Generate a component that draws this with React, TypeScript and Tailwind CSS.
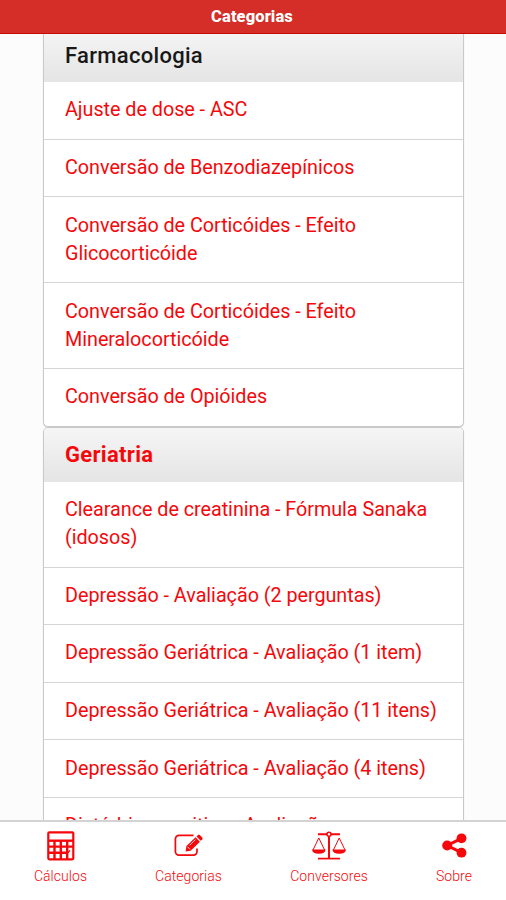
import type { ReactNode } from "react";

type Section = {
    title: string;
    active?: boolean;
    items: string[];
};

const sections: Section[] = [
    {
        title: "Farmacologia",
        items: [
            "Ajuste de dose - ASC",
            "Conversão de Benzodiazepínicos",
            "Conversão de Corticóides - Efeito Glicocorticóide",
            "Conversão de Corticóides - Efeito Mineralocorticóide",
            "Conversão de Opióides",
        ],
    },
    {
        title: "Geriatria",
        active: true,
        items: [
            "Clearance de creatinina - Fórmula Sanaka (idosos)",
            "Depressão - Avaliação (2 perguntas)",
            "Depressão Geriátrica - Avaliação (1 item)",
            "Depressão Geriátrica - Avaliação (11 itens)",
            "Depressão Geriátrica - Avaliação (4 itens)",
            "Distúrbio cognitivo - Avaliação",
        ],
    },
];

function CalculatorIcon() {
    return (
        <svg width="28" height="30" viewBox="0 0 28 30" fill="none" stroke="currentColor">
            <rect x="1.3" y="1.3" width="25" height="27" rx="1" strokeWidth="2.2" />
            <path d="M1 9.7h26" strokeWidth="2.4" />
            <path d="M1 15.6h26M1 21.8h20" strokeWidth="2.4" />
            <path d="M7.5 10v18M13.8 10v18M20.2 10v18" strokeWidth="2.4" />
            <path d="M20 22.5l3-3" strokeWidth="1.3" />
        </svg>
    );
}

function EditIcon() {
    return (
        <svg width="30" height="25" viewBox="0 0 30 25" fill="none" stroke="currentColor">
            <path d="M19.5 2.3H5a3.6 3.6 0 0 0-3.6 3.6v12.6A3.6 3.6 0 0 0 5 22.1h14.4a3.6 3.6 0 0 0 3.6-3.6V15.6" strokeWidth="1.7" />
            <path d="M11.6 18.6l.8-5.5L21.6 4.3l4.3 4.5-9.2 8.9z" fill="currentColor" stroke="none" />
            <path d="M22.5 3.4l1.6-1.5q.8-.7 1.6 0l2.6 2.7q.7.8 0 1.6l-1.6 1.6z" fill="currentColor" stroke="none" />
            <path d="M13.5 13.7l2.6 2.7M15.5 12.3l6-5.7" stroke="#fff" strokeWidth="0.8" />
        </svg>
    );
}

function ScaleIcon() {
    return (
        <svg width="36" height="30" viewBox="0 0 36 30" fill="none" stroke="currentColor">
            <path d="M7 3.2h22M18 4v23" strokeWidth="2" />
            <path d="M7 27.6h22" strokeWidth="1.7" />
            <circle cx="18" cy="3.2" r="2" fill="#fff" strokeWidth="1.5" />
            <path d="M2 19L7.8 7l5.8 12M22.4 19L28.2 7 34 19" strokeWidth="1" />
            <path d="M1 18.5h13.6q-.5 4.3-6.8 4.3T1 18.5zM21.4 18.5H35q-.5 4.3-6.8 4.3t-6.8-4.3z" fill="currentColor" stroke="none" />
        </svg>
    );
}

function ShareIcon() {
    return (
        <svg width="25" height="25" viewBox="0 0 25 25" fill="currentColor">
            <circle cx="5.2" cy="12.5" r="5" />
            <circle cx="19.5" cy="5.3" r="4.9" />
            <circle cx="19.5" cy="19.7" r="4.9" />
            <path d="M19.5 5.3L5.2 12.5l14.3 7.2" fill="none" stroke="currentColor" strokeWidth="3" />
        </svg>
    );
}

function NavItem({ icon, label, className }: { icon: ReactNode; label: string; className: string }) {
    return (
        <a className={`flex flex-col items-center ${className}`}>
            <span className="flex h-[31px] items-center">{icon}</span>
            <span className="mt-[6px] text-[14px] leading-[18px] font-light tracking-[0.05px]">{label}</span>
        </a>
    );
}

export default function App() {
    return (
        <div className="flex h-[900px] w-[506px] flex-col overflow-hidden bg-[#fcfcfc] font-['Roboto',sans-serif]">
            <header className="flex h-[34px] shrink-0 items-center justify-center border-b border-[#c90b08] bg-[#d52d28] pt-[2px] pr-[2px] text-[16.5px] font-extrabold tracking-[0.1px] text-white">
                Categorias
            </header>

            <main className="min-h-0 flex-1 overflow-hidden">
                <div className="-mt-[7px] ml-[43px] w-[421px]">
                    {sections.map((section) => (
                        <section key={section.title} className="overflow-hidden rounded-[5px] border border-[#c9c9c9] bg-white shadow-[0_1px_1px_#d8d8d8]">
                            <h2
                                className={`flex h-[54.2px] items-center bg-linear-to-b from-[#f5f5f5] to-[#e5e5e5] px-[21px] text-[22px] tracking-[0.3px] ${
                                    section.active ? "font-bold text-[#f5080b]" : "font-medium text-[#181818]"
                                }`}
                            >
                                {section.title}
                            </h2>
                            <ul>
                                {section.items.map((item) => (
                                    <li
                                        key={item}
                                        className="border-b border-[#d5d5d5] px-[21px] pt-[14.3px] pb-[14.25px] text-[19.8px] leading-[28.1px] tracking-[-0.04px] text-[#f5080b] last:border-b-0"
                                    >
                                        {item}
                                    </li>
                                ))}
                            </ul>
                        </section>
                    ))}
                </div>
            </main>

            <nav className="flex h-[80px] shrink-0 border-t-2 border-[#d3d3d3] bg-white pt-[8px] text-[#f5080b]">
                <NavItem icon={<CalculatorIcon />} label="Cálculos" className="w-[121px]" />
                <NavItem icon={<EditIcon />} label="Categorias" className="w-[135px]" />
                <NavItem icon={<ScaleIcon />} label="Conversores" className="w-[146px]" />
                <NavItem icon={<ShareIcon />} label="Sobre" className="w-[104px]" />
            </nav>
        </div>
    );
}
